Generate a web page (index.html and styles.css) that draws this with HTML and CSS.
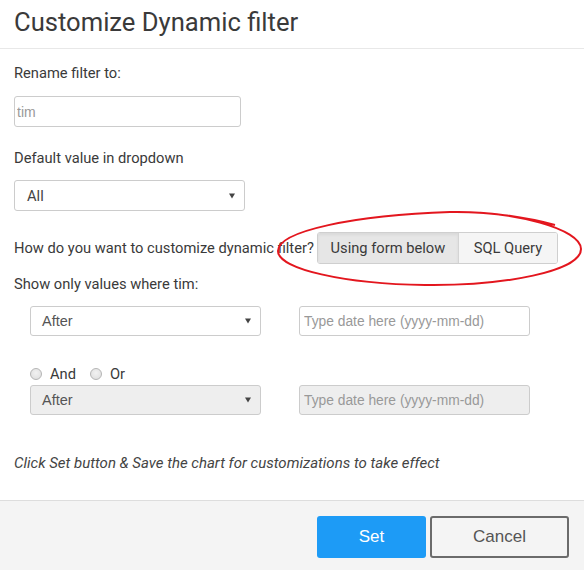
FILE: index.html
```html
<!DOCTYPE html>
<html>
<head>
<meta charset="utf-8">
<link rel="stylesheet" href="styles.css">
</head>
<body>
<div class="dialog">
  <div class="header">
    <h1 class="title">Customize Dynamic filter</h1>
  </div>
  <div class="content">
    <div class="label first">Rename filter to:</div>
    <input class="text-input name-input" type="text" placeholder="tim">
    <div class="label second">Default value in dropdown</div>
    <div class="select default-select"><span class="select-text">All</span><svg class="caret" width="6" height="6" viewBox="0 0 6 6"><path d="M0 0.5H6L3 5.5Z" fill="#444"/></svg></div>

    <div class="mode-row">
      <span class="label-inline">How do you want to customize dynamic filter?</span>
      <div class="btn-group">
        <button class="seg active">Using form below</button>
        <button class="seg">SQL Query</button>
      </div>
    </div>

    <div class="label show">Show only values where tim:</div>

    <div class="cond-row">
      <div class="select cond-select"><span class="select-text arial">After</span><svg class="caret" width="6" height="6" viewBox="0 0 6 6"><path d="M0 0.5H6L3 5.5Z" fill="#444"/></svg></div>
      <input class="text-input date-input" type="text" placeholder="Type date here (yyyy-mm-dd)">
    </div>

    <div class="radio-row">
      <span class="radio"></span><span class="radio-label">And</span>
      <span class="radio"></span><span class="radio-label">Or</span>
    </div>

    <div class="cond-row second-cond">
      <div class="select cond-select disabled"><span class="select-text arial">After</span><svg class="caret" width="6" height="6" viewBox="0 0 6 6"><path d="M0 0.5H6L3 5.5Z" fill="#444"/></svg></div>
      <input class="text-input date-input disabled" type="text" placeholder="Type date here (yyyy-mm-dd)" disabled>
    </div>

    <div class="note">Click Set button &amp; Save the chart for customizations to take effect</div>

    <svg class="annotation" width="310" height="80" viewBox="0 0 310 80">
      <path d="M175 3 C 240 2, 306 20, 306 40 C 306 62, 230 77, 150 76 C 70 75, 3 60, 3 42 C 3 22, 80 6, 175 3 C 210 2, 250 8, 280 16" fill="none" stroke="#e3161e" stroke-width="2"/>
    </svg>
  </div>
  <div class="footer">
    <button class="btn btn-primary">Set</button>
    <button class="btn btn-cancel">Cancel</button>
  </div>
</div>
</body>
</html>
```

FILE: styles.css
```css
* { box-sizing: border-box; }

html, body {
  margin: 0;
  padding: 0;
  background: #ffffff;
}

body {
  font-family: Roboto, "Liberation Sans", Arial, sans-serif;
  color: #3a3a3a;
  font-size: 14.7px;
  width: 584px;
  height: 570px;
  overflow: hidden;
}

.dialog {
  display: flex;
  flex-direction: column;
  height: 570px;
}

.header {
  height: 49px;
  border-bottom: 1px solid #e8e8e8;
  padding: 0 14px;
}

.title {
  margin: 0;
  font-weight: 400;
  font-size: 25.6px;
  line-height: 44px;
  color: #3a3a3a;
}

.content {
  position: relative;
  flex: 1;
  padding: 14px 14px 0 14px;
}

.label {
  line-height: 20px;
  font-size: 14.7px;
  color: #3a3a3a;
}

.text-input {
  display: block;
  height: 31px;
  border: 1px solid #cccccc;
  border-radius: 3px;
  padding: 0 2px;
  font-family: "Liberation Sans", Arial, sans-serif;
  font-size: 14px;
  color: #555;
  background: #fff;
  outline: none;
  margin: 0;
}

.text-input::placeholder {
  color: #999999;
  opacity: 1;
}

.name-input {
  margin-top: 13px;
  width: 227px;
}

.second {
  margin-top: 21px;
}

.select {
  display: flex;
  align-items: center;
  justify-content: space-between;
  height: 31px;
  border: 1px solid #cccccc;
  border-radius: 3px;
  padding: 0 9px 0 12px;
  background: #fff;
}

.select-text {
  font-family: Roboto, "Liberation Sans", sans-serif;
  font-size: 14.7px;
  color: #444;
}

.select-text.arial {
  font-family: "Liberation Sans", Arial, sans-serif;
  font-size: 14.5px;
  color: #555;
}

.caret {
  display: block;
}

.default-select {
  margin-top: 12px;
  width: 231px;
}

.mode-row {
  display: flex;
  align-items: center;
  margin-top: 21px;
  height: 32px;
}

.label-inline {
  line-height: 20px;
  margin-right: 3px;
}

.btn-group {
  display: flex;
  height: 32px;
  border: 1px solid #cfcfcf;
  border-radius: 3px;
  overflow: hidden;
}

.seg {
  font-family: Roboto, "Liberation Sans", sans-serif;
  font-size: 14.7px;
  color: #3a3a3a;
  border: none;
  margin: 0;
  background: #f5f5f5;
  padding: 0;
  height: 30px;
  cursor: pointer;
}

.seg.active {
  background: #e6e6e6;
  border-right: 1px solid #d4d4d4;
  box-shadow: inset 0 2px 3px rgba(0,0,0,0.06);
  width: 141px;
}

.seg:last-child {
  width: 98px;
}

.show {
  margin-top: 10px;
}

.cond-row {
  display: flex;
  gap: 38px;
  margin-top: 12px;
  padding-left: 16px;
}

.cond-select {
  width: 231px;
  height: 30px;
  padding-left: 11px;
}

.date-input {
  width: 231px;
  height: 30px;
  padding: 0 4px;
  font-size: 13.8px;
}

.disabled {
  background: #eeeeee;
}

.radio-row {
  display: flex;
  align-items: center;
  margin-top: 28px;
  padding-left: 16px;
  height: 20px;
}

.radio {
  width: 12px;
  height: 12px;
  border-radius: 50%;
  border: 1px solid #b5b5b5;
  background: radial-gradient(circle at 50% 40%, #f2f2f2 0%, #dcdcdc 100%);
  margin-right: 8px;
}

.radio-label {
  font-size: 14.7px;
  color: #3a3a3a;
  margin-right: 14px;
}

.second-cond {
  margin-top: 1px;
}

.note {
  margin-top: 38px;
  font-style: italic;
  font-size: 15px;
  line-height: 20px;
  color: #444;
}

.annotation {
  position: absolute;
  left: 275px;
  top: 160px;
  pointer-events: none;
}

.footer {
  height: 70px;
  border-top: 1px solid #dddddd;
  background: #f4f4f4;
  display: flex;
  justify-content: flex-end;
  align-items: flex-start;
  gap: 4px;
  padding: 15px 15px 0 0;
}

.btn {
  height: 42px;
  border-radius: 3px;
  font-family: "Liberation Sans", Arial, sans-serif;
  font-size: 17px;
  margin: 0;
  cursor: pointer;
}

.btn-primary {
  width: 109px;
  background: #1d9bf6;
  border: none;
  color: #fff;
}

.btn-cancel {
  width: 139px;
  background: #f4f4f4;
  border: 2px solid #6b6b6b;
  color: #555;
}
```
